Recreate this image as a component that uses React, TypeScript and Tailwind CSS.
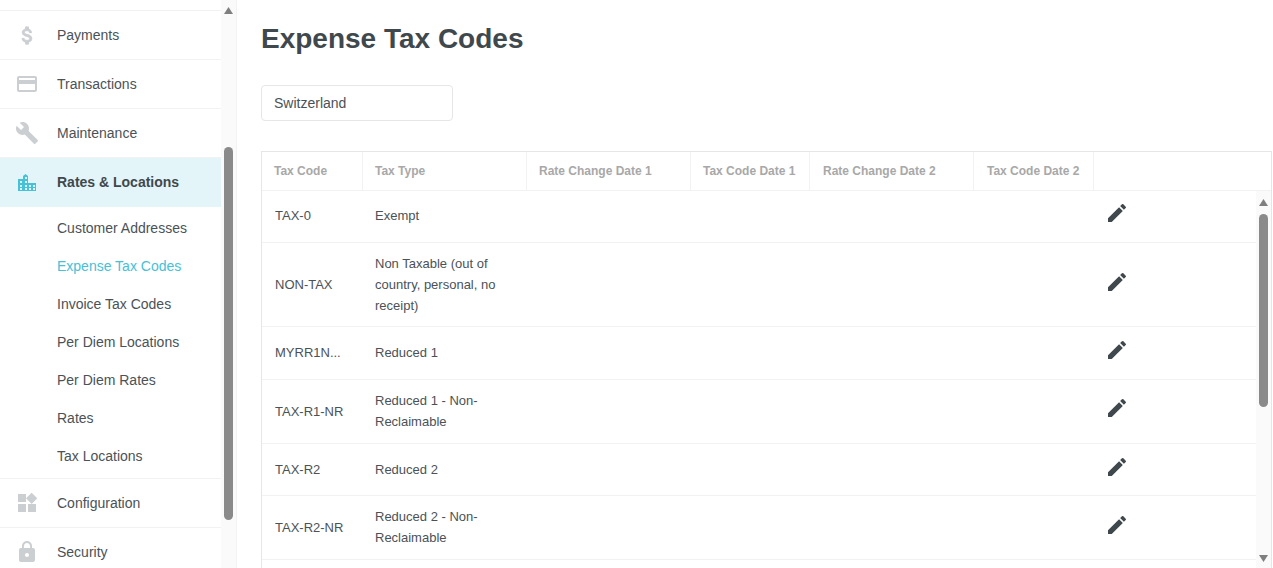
import { MdBuild, MdCreditCard, MdEdit, MdLock, MdWidgets } from "react-icons/md";
import type { ReactNode } from "react";

const subItems = [
  "Customer Addresses",
  "Expense Tax Codes",
  "Invoice Tax Codes",
  "Per Diem Locations",
  "Per Diem Rates",
  "Rates",
  "Tax Locations",
];

const headers = [
  { label: "Tax Code", cls: "w-[101px] pl-3" },
  { label: "Tax Type", cls: "w-[164px] pl-3" },
  { label: "Rate Change Date 1", cls: "w-[164px] pl-3" },
  { label: "Tax Code Date 1", cls: "w-[119px] pl-3" },
  { label: "Rate Change Date 2", cls: "w-[164px] pl-[13px]" },
  { label: "Tax Code Date 2", cls: "w-[120px] pl-[13px]" },
];

const rows = [
  { code: "TAX-0", type: ["Exempt"], h: "h-[52px]", codePb: "pb-[2px]", typePb: "pb-[2px]", editPb: "pb-[7px]" },
  {
    code: "NON-TAX",
    type: ["Non Taxable (out of", "country, personal, no", "receipt)"],
    h: "h-[84px]",
    codePb: "",
    typePb: "",
    editPb: "pb-[5px]",
  },
  { code: "MYRR1N...", type: ["Reduced 1"], h: "h-[53px]", codePb: "pb-[2px]", typePb: "pb-[2px]", editPb: "pb-[7px]" },
  { code: "TAX-R1-NR", type: ["Reduced 1 - Non-", "Reclaimable"], h: "h-[64px]", codePb: "", typePb: "pb-[2px]", editPb: "pb-[7px]" },
  { code: "TAX-R2", type: ["Reduced 2"], h: "h-[52px]", codePb: "", typePb: "", editPb: "pb-[5px]" },
  { code: "TAX-R2-NR", type: ["Reduced 2 - Non-", "Reclaimable"], h: "h-[64px]", codePb: "", typePb: "pb-[2px]", editPb: "pb-[5px]" },
];

function DollarIcon() {
  return (
    <svg width="23" height="23" viewBox="0 0 24 24" fill="currentColor" stroke="currentColor" strokeWidth="1">
      <path d="M11.8 10.9c-2.27-.59-3-1.2-3-2.15 0-1.09 1.01-1.85 2.7-1.85 1.78 0 2.44.85 2.5 2.1h2.21c-.07-1.72-1.12-3.3-3.21-3.81V3h-3v2.16c-1.94.42-3.5 1.68-3.5 3.61 0 2.31 1.91 3.46 4.7 4.13 2.5.6 3 1.48 3 2.41 0 .69-.49 1.79-2.7 1.79-2.06 0-2.87-.92-2.98-2.1h-2.2c.12 2.19 1.76 3.42 3.68 3.83V21h3v-2.15c1.95-.37 3.5-1.5 3.5-3.55 0-2.84-2.43-3.81-4.7-4.4z" />
    </svg>
  );
}

function BuildingIcon() {
  return (
    <svg width="18" height="17" viewBox="0 0 18 17" className="text-[#45c1d8]">
      <path
        fill="currentColor"
        fillRule="evenodd"
        d="M0 5h5V2l2.5-2L10 2v7h8v8H0V5Zm7-2v2h2V3H7ZM2 7v2h2V7H2Zm5 0v2h2V7H7Zm-5 4v2h2v-2H2Zm5 0v2h2v-2H7Zm4 0v2h2v-2h-2Zm4 0v2h2v-2h-2ZM2 14v2h2v-2H2Zm5 0v2h2v-2H7Zm4 0v2h2v-2h-2Zm4 0v2h2v-2h-2Z"
      />
    </svg>
  );
}

function Arrow({ down }: { down?: boolean }) {
  return (
    <svg width="9" height="7" viewBox="0 0 9 7" className="shrink-0 text-[#7f7f7f]">
      <path fill="currentColor" d={down ? "M4.5 7 9 0H0Z" : "M4.5 0 9 7H0Z"} />
    </svg>
  );
}

function NavRow({ icon, label, active }: { icon: ReactNode; label: string; active?: boolean }) {
  return (
    <div
      className={
        active
          ? "flex h-[49px] shrink-0 items-center bg-[#e4f5f9] text-[14px] font-bold text-[#3f484d]"
          : "flex h-[49px] shrink-0 items-center border-b border-[#f2f2f2] text-[14px] text-[#4a5257]"
      }
    >
      <span className="flex w-[57px] justify-center pr-[3px] text-[#cbcfd2]">{icon}</span>
      {label}
    </div>
  );
}

function Scrollbar() {
  return (
    <div className="flex w-[15px] shrink-0 flex-col items-center bg-[#fafafa] pt-[7px]">
      <Arrow />
      <div className="mt-[133px] h-[373px] w-[9px] rounded-[5px] bg-[#8a8a8a]" />
    </div>
  );
}

export default function App() {
  return (
    <div className="flex h-[568px] w-[1273px] overflow-hidden bg-white font-['Liberation_Sans',Arial,sans-serif]">
      {/* Sidebar */}
      <div className="flex w-[237px] shrink-0 border-r border-[#f2f2f2]">
        <div className="flex w-[221px] shrink-0 flex-col">
          <div className="h-[11px] shrink-0 border-b border-[#f2f2f2]" />
          <NavRow icon={<DollarIcon />} label="Payments" />
          <NavRow icon={<MdCreditCard size={24} />} label="Transactions" />
          <NavRow icon={<MdBuild size={24} />} label="Maintenance" />
          <NavRow icon={<BuildingIcon />} label="Rates & Locations" active />
          <div className="flex shrink-0 flex-col border-b border-[#f2f2f2] pb-[3px] pt-[2px]">
            {subItems.map((s) => (
              <div
                key={s}
                className={
                  s === "Expense Tax Codes"
                    ? "flex h-[38px] items-center pl-[57px] text-[14px] text-[#45c1d8]"
                    : "flex h-[38px] items-center pl-[57px] text-[14px] text-[#4a5257]"
                }
              >
                {s}
              </div>
            ))}
          </div>
          <NavRow icon={<MdWidgets size={24} />} label="Configuration" />
          <NavRow icon={<MdLock size={24} />} label="Security" />
        </div>
        <Scrollbar />
      </div>

      {/* Content */}
      <div className="min-w-0 flex-1 pl-6">
        <h1 className="mt-[22px] text-[28px] font-bold leading-[34px] text-[#3f484d]">Expense Tax Codes</h1>
        <div className="mt-[29px] flex h-[36px] w-[192px] items-center rounded-[4px] border border-[#e6e6e6] pl-3 text-[14px] text-[#4a5257]">
          Switzerland
        </div>

        <div className="mt-[30px] w-[1011px] border border-b-0 border-[#e6e6e6]">
          {/* Header */}
          <div className="flex h-[39px] border-b border-[#f2f2f2]">
            {headers.map((h) => (
              <div
                key={h.label}
                className={`${h.cls} flex shrink-0 items-center border-r border-[#f2f2f2] text-[12px] font-bold text-[#a8a8a8]`}
              >
                {h.label}
              </div>
            ))}
          </div>
          {/* Body */}
          <div className="flex h-[400px] overflow-hidden">
            <div className="min-w-0 flex-1">
              {rows.map((r) => (
                <div key={r.code} className={`${r.h} flex border-b border-[#f2f2f2] text-[13px] leading-[21px] text-[#4a5257]`}>
                  <div className={`${r.codePb} flex w-[101px] shrink-0 items-center pl-[13px]`}>{r.code}</div>
                  <div className={`${r.typePb} flex w-[164px] shrink-0 flex-col justify-center pl-3`}>
                    {r.type.map((t) => (
                      <span key={t}>{t}</span>
                    ))}
                  </div>
                  <div className="w-[567px] shrink-0" />
                  <div className={`${r.editPb} flex items-center pl-[11px] text-[#3f484d]`}>
                    <MdEdit size={24} />
                  </div>
                </div>
              ))}
            </div>
            <div className="flex w-[15px] shrink-0 flex-col items-center bg-[#fafafa] pt-[8px]">
              <Arrow />
              <div className="mt-[8px] h-[193px] w-[9px] rounded-[5px] bg-[#8a8a8a]" />
              <div className="mt-[148px]">
                <Arrow down />
              </div>
            </div>
          </div>
        </div>
      </div>
    </div>
  );
}
